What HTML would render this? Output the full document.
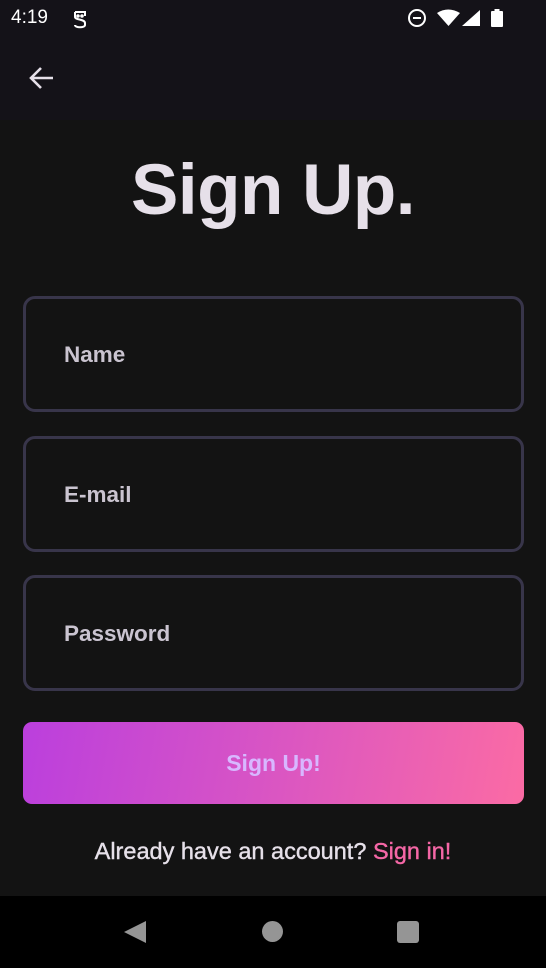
<!DOCTYPE html>
<html><head><meta charset="utf-8"><style>
*{margin:0;padding:0;box-sizing:border-box}
body{width:546px;height:968px;background:#131313;font-family:"Liberation Sans",sans-serif;position:relative;overflow:hidden}
.top{position:absolute;left:0;top:0;width:546px;height:120px;background:#141218}
.time{position:absolute;left:11px;top:7px;color:#fff;font-size:19px}
.field{position:absolute;left:23px;width:501px;height:116px;border:3px solid #38354a;border-radius:12px}
.field span{position:absolute;left:38px;top:43px;color:#cac4d0;font-size:22.5px;font-weight:bold}
.btn{position:absolute;left:23px;top:722px;width:501px;height:82px;border-radius:9px;background:linear-gradient(100deg,#bb3fdd,#d653c6 45%,#fb6ba4);color:#d8b7ff;font-weight:bold;font-size:23px;text-align:center;line-height:82px}
.nav{position:absolute;left:0;top:896px;width:546px;height:72px;background:#000}
</style></head><body>
<div class="top">
<div class="time">4:19</div>
<svg style="position:absolute;left:71px;top:8px" width="18" height="22" viewBox="0 0 18 22" fill="none" stroke="#fff" stroke-width="2"><path d="M4 4h10v4M4 4v5c0 3 10 2 10 6v2c0 3-10 3-10 0"/><circle cx="7" cy="8" r="0.8" fill="#fff"/><circle cx="11" cy="8" r="0.8" fill="#fff"/></svg>
<svg style="position:absolute;left:406px;top:7px" width="100" height="22" viewBox="0 0 100 22"><circle cx="11" cy="11" r="8" fill="none" stroke="#fff" stroke-width="2"/><rect x="7" y="10" width="8" height="2" fill="#fff"/><path d="M31 6 Q42 -1 54 6 L42.5 19Z" fill="#fff"/><path d="M56 19 L74 3 L74 19Z" fill="#fff"/><rect x="85" y="4" width="12" height="16" rx="1" fill="#fff"/><rect x="88.5" y="2" width="5" height="3" fill="#fff"/></svg>
<svg style="position:absolute;left:28px;top:66px" width="26" height="24" viewBox="0 0 26 24" fill="none" stroke="#e6e0e9" stroke-width="2.6"><path d="M25 12H3M13 2L3 12l10 10"/></svg>
</div>
<div style="position:absolute;left:0;width:546px;top:150px;text-align:center;color:#e6e0e9;font-size:71px;font-weight:bold;letter-spacing:-0.5px">Sign Up.</div>
<div class="field" style="top:296px"><span>Name</span></div>
<div class="field" style="top:436px"><span>E-mail</span></div>
<div class="field" style="top:575px"><span>Password</span></div>
<div class="btn">Sign Up!</div>
<div style="position:absolute;left:0;width:546px;top:838px;text-align:center;color:#e6e0e9;font-size:23.5px;-webkit-text-stroke:0.4px #e6e0e9">Already have an account? <span style="color:#f567a6;-webkit-text-stroke:0.4px #f567a6">Sign in!</span></div>
<div class="nav">
<svg style="position:absolute;left:118px;top:22px" width="30" height="28" viewBox="0 0 30 28"><path d="M28 3L6 14l22 11Z" fill="#959595"/></svg>
<div style="position:absolute;left:262px;top:25px;width:21px;height:21px;border-radius:50%;background:#959595"></div>
<div style="position:absolute;left:397px;top:25px;width:22px;height:22px;border-radius:3px;background:#959595"></div>
</div>
</body></html>
